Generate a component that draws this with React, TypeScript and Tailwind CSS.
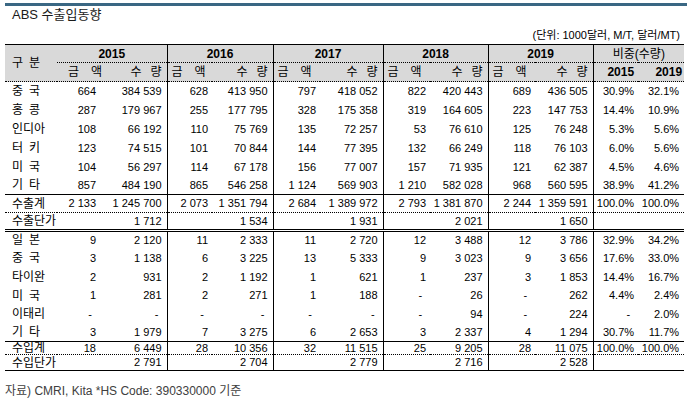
import React from 'react';

const font = "font-['Liberation_Sans','Noto_Sans_CJK_KR',sans-serif]";

type Row = { label: string; v: string[] };

const exportRows: Row[] = [
  { label: '중국', v: ['664', '384 539', '628', '413 950', '797', '418 052', '822', '420 443', '689', '436 505', '30.9%', '32.1%'] },
  { label: '홍콩', v: ['287', '179 967', '255', '177 795', '328', '175 358', '319', '164 605', '223', '147 753', '14.4%', '10.9%'] },
  { label: '인디아', v: ['108', '66 192', '110', '75 769', '135', '72 257', '53', '76 610', '125', '76 248', '5.3%', '5.6%'] },
  { label: '터키', v: ['123', '74 515', '101', '70 844', '144', '77 395', '132', '66 249', '118', '76 103', '6.0%', '5.6%'] },
  { label: '미국', v: ['104', '56 297', '114', '67 178', '156', '77 007', '157', '71 935', '121', '62 387', '4.5%', '4.6%'] },
  { label: '기타', v: ['857', '484 190', '865', '546 258', '1 124', '569 903', '1 210', '582 028', '968', '560 595', '38.9%', '41.2%'] },
];

const importRows: Row[] = [
  { label: '일본', v: ['9', '2 120', '11', '2 333', '11', '2 720', '12', '3 488', '12', '3 786', '32.9%', '34.2%'] },
  { label: '중국', v: ['3', '1 138', '6', '3 225', '13', '5 333', '9', '3 023', '9', '3 656', '17.6%', '33.0%'] },
  { label: '타이완', v: ['2', '931', '2', '1 192', '1', '621', '1', '237', '3', '1 853', '14.4%', '16.7%'] },
  { label: '미국', v: ['1', '281', '2', '271', '1', '188', '-', '26', '-', '262', '4.4%', '2.4%'] },
  { label: '이태리', v: ['-', '-', '-', '-', '-', '-', '-', '94', '-', '224', '-', '2.0%'] },
  { label: '기타', v: ['3', '1 979', '7', '3 275', '6', '2 653', '3', '2 337', '4', '1 294', '30.7%', '11.7%'] },
];

const exportHeights = ['h-[19px]', 'h-[19px]', 'h-[19px]', 'h-[19px]', 'h-[19px]', 'h-[18px]'];
const importHeights = ['h-[18px]', 'h-[19px]', 'h-[19px]', 'h-[18px]', 'h-[19px]', 'h-[18px]'];

const dotB = 'border-b border-b-black [border-bottom-style:dotted]';
const vline = 'border-l border-l-black';

// left edge of each year group (and the share group) gets the solid rule
const groupStart = (i: number) => i >= 2 && i % 2 === 0;

const Label = ({ text }: { text: string }) =>
  text.length === 2 ? (
    <span className="flex w-[28px] justify-between">
      <span>{text[0]}</span>
      <span>{text[1]}</span>
    </span>
  ) : (
    <span>{text}</span>
  );

const DataRow = ({ row, h, line }: { row: Row; h: string; line?: string }) => (
  <tr className={h}>
    <td className={`pl-[7px] text-[12px] ${line ?? ''}`}>
      <Label text={row.label} />
    </td>
    {row.v.map((val, i) => (
      <td
        key={i}
        className={`text-right ${val === '-' ? 'pr-[8px]' : i % 2 === 0 ? 'pr-[4px]' : 'pr-[5px]'} ${
          groupStart(i) ? vline : ''
        } ${line ?? ''}`}
      >
        {val}
      </td>
    ))}
  </tr>
);

const PriceRow = ({ label, vals, h, line }: { label: string; vals: string[]; h: string; line: string }) => (
  <tr className={h}>
    <td className={`pl-[7px] text-[12px] ${line}`}>{label}</td>
    {vals.map((val, i) => (
      <React.Fragment key={i}>
        <td className={`${i > 0 ? vline : ''} ${line}`} />
        <td className={`pr-[5px] text-right ${line}`}>{val}</td>
      </React.Fragment>
    ))}
    <td className={`${vline} ${line}`} />
    <td className={line} />
  </tr>
);

const years = ['2015', '2016', '2017', '2018', '2019'];

export default function App() {
  return (
    <div className={`flex h-[400px] w-[687px] flex-col bg-white pt-[3px] text-black ${font}`}>
      <div className="ml-[5px] h-[3px] w-[682px] shrink-0 bg-[#3a6783]" />
      <div className="pl-[12px] pt-[2px] text-[13px] leading-[14px] text-[#1a1a1a]">ABS 수출입동향</div>
      <div className="pr-[7px] pt-[7px] text-right text-[11px] leading-[12px]">(단위: 1000달러, M/T, 달러/MT)</div>
      <table className="ml-[5px] mt-[3px] w-[679px] table-fixed border-collapse text-[11px] leading-none">
        <colgroup>
          <col className="w-[52px]" />
          <col className="w-[43px]" />
          <col className="w-[67px]" />
          <col className="w-[45px]" />
          <col className="w-[61px]" />
          <col className="w-[47px]" />
          <col className="w-[63px]" />
          <col className="w-[47px]" />
          <col className="w-[58px]" />
          <col className="w-[47px]" />
          <col className="w-[58px]" />
          <col className="w-[45px]" />
          <col className="w-[46px]" />
        </colgroup>
        <thead className="bg-[#d9d9d9] text-[12px]">
          <tr className="h-[18px] border-t border-t-black">
            <td rowSpan={2} className={`${dotB} pl-[7px]`}>
              <span className="flex w-[28px] justify-between">
                <span>구</span>
                <span>분</span>
              </span>
            </td>
            {years.map((y, i) => (
              <td key={y} colSpan={2} className={`${dotB} pt-[1px] text-center font-bold ${i > 0 ? vline : ''}`}>
                {y}
              </td>
            ))}
            <td colSpan={2} className={`${dotB} ${vline} text-center`}>
              비중(수량)
            </td>
          </tr>
          <tr className="h-[19px]">
            {years.map((y, i) => (
              <React.Fragment key={y}>
                <td className={`${dotB} ${i > 0 ? `${vline} pl-[4px]` : 'pl-[11px]'}`}>
                  <span className="flex gap-[12px]">
                    <span>금</span>
                    <span>액</span>
                  </span>
                </td>
                <td className={`${dotB} pr-[5px]`}>
                  <span className="flex justify-end gap-[9px]">
                    <span>수</span>
                    <span>량</span>
                  </span>
                </td>
              </React.Fragment>
            ))}
            <td className={`${dotB} ${vline} pr-[4px] text-right font-bold`}>2015</td>
            <td className={`${dotB} pr-[2px] text-right font-bold`}>2019</td>
          </tr>
        </thead>
        <tbody>
          {exportRows.map((r, i) => (
            <DataRow key={'e' + i} row={r} h={exportHeights[i]} />
          ))}
          <DataRow
            row={{ label: '수출계', v: ['2 133', '1 245 700', '2 073', '1 351 794', '2 684', '1 389 972', '2 793', '1 381 870', '2 244', '1 359 591', '100.0%', '100.0%'] }}
            h="h-[18px]"
            line={`border-t border-t-black ${dotB}`}
          />
          <PriceRow label="수출단가" vals={['1 712', '1 534', '1 931', '2 021', '1 650']} h="h-[18px]" line="border-b-[3px] border-double border-b-black" />
          {importRows.map((r, i) => (
            <DataRow key={'i' + i} row={r} h={importHeights[i]} />
          ))}
          <DataRow
            row={{ label: '수입계', v: ['18', '6 449', '28', '10 356', '32', '11 515', '25', '9 205', '28', '11 075', '100.0%', '100.0%'] }}
            h="h-[12px]"
            line={`border-t border-t-black ${dotB}`}
          />
          <PriceRow label="수입단가" vals={['2 791', '2 704', '2 779', '2 716', '2 528']} h="h-[16px]" line="border-b border-b-black" />
        </tbody>
      </table>
      <div className="pl-[5px] pt-[13px] text-[12px] leading-[14px] text-[#404040]">자료) CMRI, Kita *HS Code: 390330000 기준</div>
    </div>
  );
}
